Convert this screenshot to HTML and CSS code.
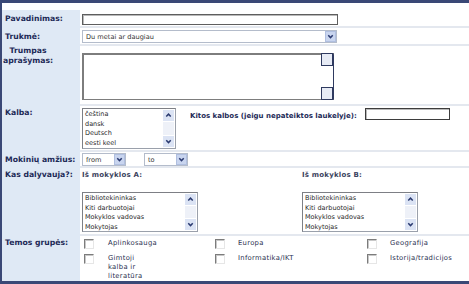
FILE: index.html
```html
<!DOCTYPE html>
<html lang="lt">
<head>
<meta charset="utf-8">
<title>Projektas</title>
<link rel="stylesheet" href="styles.css">
</head>
<body>
<div class="frame">
  <div class="topgap"></div>

  <div class="row r1">
    <div class="lbl mid">Pavadinimas:</div>
    <div class="cell"><div class="input wide"></div></div>
  </div>

  <div class="row r2">
    <div class="lbl mid">Trukmė:</div>
    <div class="cell">
      <div class="select long"><span class="val">Du metai ar daugiau</span><span class="arr"><svg viewBox="0 0 10 10"><path d="M2.5 3.5 5 6.2 7.5 3.5" fill="none" stroke="#2a3a70" stroke-width="1.6"/></svg></span></div>
    </div>
  </div>

  <div class="row r3">
    <div class="lbl multi"><span class="ml">Trumpas<br>aprašymas:</span></div>
    <div class="cell">
      <div class="textarea">
        <div class="tsb"><span class="tbox"></span><span class="tbox"></span></div>
      </div>
    </div>
  </div>

  <div class="row r4">
    <div class="lbl top">Kalba:</div>
    <div class="cell kalba">
      <div class="listbox lang">
        <ul class="items">
          <li>čeština</li>
          <li>dansk</li>
          <li>Deutsch</li>
          <li>eesti keel</li>
        </ul>
        <div class="sb">
          <span class="sbtn"><svg viewBox="0 0 10 10"><path d="M2.5 6.2 5 3.5 7.5 6.2" fill="none" stroke="#2a3a70" stroke-width="1.6"/></svg></span>
          <span class="thumb"></span>
          <span class="sbtn"><svg viewBox="0 0 10 10"><path d="M2.5 3.5 5 6.2 7.5 3.5" fill="none" stroke="#2a3a70" stroke-width="1.6"/></svg></span>
        </div>
      </div>
      <div class="other">Kitos kalbos (jeigu nepateiktos laukelyje):</div>
      <div class="input short"></div>
    </div>
  </div>

  <div class="row r5">
    <div class="lbl mid">Mokinių amžius:</div>
    <div class="cell ages">
      <div class="select small"><span class="val">from</span><span class="arr"><svg viewBox="0 0 10 10"><path d="M2.5 3.5 5 6.2 7.5 3.5" fill="none" stroke="#2a3a70" stroke-width="1.6"/></svg></span></div>
      <div class="select small"><span class="val">to</span><span class="arr"><svg viewBox="0 0 10 10"><path d="M2.5 3.5 5 6.2 7.5 3.5" fill="none" stroke="#2a3a70" stroke-width="1.6"/></svg></span></div>
    </div>
  </div>

  <div class="row r6">
    <div class="lbl top">Kas dalyvauja?:</div>
    <div class="cell schools">
      <div class="school">
        <div class="stitle">Iš mokyklos A:</div>
        <div class="listbox staff">
          <ul class="items">
            <li>Bibliotekininkas</li>
            <li>Kiti darbuotojai</li>
            <li>Mokyklos vadovas</li>
            <li>Mokytojas</li>
          </ul>
          <div class="sb">
            <span class="sbtn"><svg viewBox="0 0 10 10"><path d="M2.5 6.2 5 3.5 7.5 6.2" fill="none" stroke="#2a3a70" stroke-width="1.6"/></svg></span>
            <span class="thumb"></span>
            <span class="sbtn"><svg viewBox="0 0 10 10"><path d="M2.5 3.5 5 6.2 7.5 3.5" fill="none" stroke="#2a3a70" stroke-width="1.6"/></svg></span>
          </div>
        </div>
      </div>
      <div class="school">
        <div class="stitle">Iš mokyklos B:</div>
        <div class="listbox staff">
          <ul class="items">
            <li>Bibliotekininkas</li>
            <li>Kiti darbuotojai</li>
            <li>Mokyklos vadovas</li>
            <li>Mokytojas</li>
          </ul>
          <div class="sb">
            <span class="sbtn"><svg viewBox="0 0 10 10"><path d="M2.5 6.2 5 3.5 7.5 6.2" fill="none" stroke="#2a3a70" stroke-width="1.6"/></svg></span>
            <span class="thumb"></span>
            <span class="sbtn"><svg viewBox="0 0 10 10"><path d="M2.5 3.5 5 6.2 7.5 3.5" fill="none" stroke="#2a3a70" stroke-width="1.6"/></svg></span>
          </div>
        </div>
      </div>
    </div>
  </div>

  <div class="row r7">
    <div class="lbl top">Temos grupės:</div>
    <div class="cell topics">
      <span class="cb"></span><span class="tl t1">Aplinkosauga</span>
      <span class="cb"></span><span class="tl t2">Europa</span>
      <span class="cb"></span><span class="tl t3">Geografija</span>
      <span class="cb"></span><span class="tl t1 narrow">Gimtoji kalba ir literatūra</span>
      <span class="cb"></span><span class="tl t2">Informatika/IKT</span>
      <span class="cb"></span><span class="tl t3">Istorija/tradicijos</span>
    </div>
  </div>
</div>
</body>
</html>
```

FILE: styles.css
```css
* { box-sizing: border-box; }
html, body { margin: 0; padding: 0; }
body {
  width: 469px;
  height: 284px;
  overflow: hidden;
  background: #fff;
  font-family: "DejaVu Sans", Verdana, sans-serif;
  color: #2b2b2b;
}
.frame {
  height: 284px;
  border-top: 3px solid #3a4876;
  border-left: 2px solid #3a4876;
  border-bottom: 3px solid #3a4876;
  display: flex;
  flex-direction: column;
  overflow: hidden;
}
.topgap { height: 7px; flex: none; }
.row {
  display: grid;
  grid-template-columns: 78px 1fr;
  flex: none;
}
.r1 { height: 18px; }
.r2 { height: 18px; }
.r3 { height: 60px; }
.r4 { height: 46px; }
.r5 { height: 16px; }
.r6 { height: 68px; }
.r7 { flex: 1; min-height: 0; }

.lbl {
  background: #dfe9f5;
  color: #1d2a57;
  font-weight: bold;
  font-size: 7.7px;
  padding-left: 3px;
  line-height: 10px;
  white-space: nowrap;
}
.lbl.mid { display: flex; align-items: center; }
.lbl.top { padding-top: 2px; }
.lbl.multi { padding-left: 1px; padding-top: 0; }
.ml { display: inline-block; text-align: center; }

.cell {
  padding-left: 2px;
  border-bottom: 2px solid #e4e8ef;
}
.r7 .cell { border-bottom: 0; }

.input {
  height: 11px;
  border: 1px solid #5e5e5e;
  box-shadow: inset 1px 1px 0 #b9b9b9;
  background: #fff;
}
.input.wide { width: 256px; margin-top: 4px; }

.select {
  display: flex;
  align-items: center;
  justify-content: space-between;
  height: 13px;
  border: 1px solid #b4bccb;
  background: #fff;
  font-size: 6.6px;
  color: #333;
  padding-left: 3px;
}
.select.long { width: 255px; margin-top: 2px; }
.arr {
  width: 11px;
  height: 11px;
  background: #c9d5ef;
  border: 1px solid #b0bfe0;
  display: flex;
  align-items: center;
  justify-content: center;
}
.arr svg, .sbtn svg { width: 9px; height: 9px; display: block; }

.textarea {
  margin-top: 7px;
  width: 252px;
  height: 47px;
  border: 1px solid #7d7d7d;
  border-top-width: 2px;
  border-left-width: 2px;
  border-right: 1px solid #2f3a60;
  display: flex;
  justify-content: flex-end;
}
.tsb {
  width: 12px;
  display: flex;
  flex-direction: column;
  justify-content: space-between;
  margin-top: -2px;
  margin-bottom: -1px;
}
.tbox {
  height: 13px;
  border: 1px solid #2f3a60;
  background: #e7ebf5;
}

.kalba { display: flex; align-items: flex-start; }
.listbox {
  display: flex;
  border: 1px solid #9aa0ab;
  border-top-color: #7d7f85;
  border-left-color: #7d7f85;
  background: #fff;
}
.listbox.lang { width: 94px; height: 41px; margin-top: 2px; }
.items {
  list-style: none;
  margin: 0;
  padding: 1px 0 0 2px;
  flex: 1;
  font-size: 6.5px;
  line-height: 9.5px;
  color: #2a2a2a;
  overflow: hidden;
  white-space: nowrap;
}
.sb {
  width: 12px;
  display: flex;
  flex-direction: column;
  justify-content: space-between;
  padding: 1px 1px 1px 0;
}
.sbtn {
  height: 11px;
  background: #dbe3f4;
  display: flex;
  align-items: center;
  justify-content: center;
}
.thumb {
  flex: 1;
  margin: 1px 0;
  background: #eef1f8;
}
.other {
  margin-left: 14px;
  margin-top: 6px;
  font-size: 7px;
  font-weight: bold;
  color: #1d2a57;
  white-space: nowrap;
}
.input.short { width: 85px; height: 12px; margin-left: 8px; margin-top: 2px; border-color: #3d3d3d; }

.ages { display: flex; gap: 18px; align-items: flex-start; padding-top: 1px; }
.select.small { width: 44px; height: 13px; }

.schools { display: flex; }
.school { width: 220px; }
.stitle {
  font-size: 7px;
  font-weight: bold;
  color: #3c4460;
  margin-top: 2px;
  letter-spacing: 0.2px;
  line-height: 10px;
}
.listbox.staff { width: 116px; height: 40px; margin-top: 12px; }

.topics {
  display: grid;
  grid-template-columns: 26px 105px 25px 127px 25px auto;
  row-gap: 4px;
  padding-top: 3px;
  align-items: start;
}
.cb {
  width: 10px;
  height: 10px;
  margin-left: 2px;
  border-top: 1px solid #7c7c7c;
  border-left: 1px solid #7c7c7c;
  border-right: 1px solid #e6e6e6;
  border-bottom: 1px solid #e6e6e6;
  box-shadow: inset 1px 1px 0 #c8c8c8;
}
.tl {
  font-size: 6.8px;
  color: #2a3050;
  letter-spacing: 0.3px;
  line-height: 9px;
}
.tl.narrow { width: 38px; }
```
